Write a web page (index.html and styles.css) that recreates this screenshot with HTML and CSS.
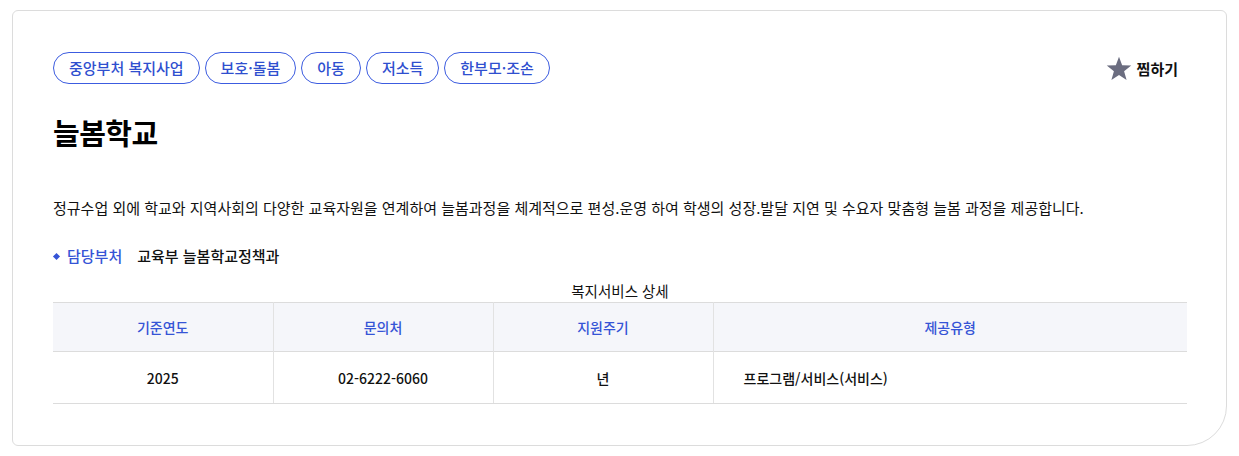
FILE: index.html
```html
<!DOCTYPE html>
<html lang="ko">
<head>
<meta charset="utf-8">
<title>늘봄학교</title>
<link rel="stylesheet" href="styles.css">
</head>
<body>
<div class="card">
  <div class="top">
    <ul class="tags">
      <li class="tag">중앙부처 복지사업</li>
      <li class="tag">보호·돌봄</li>
      <li class="tag">아동</li>
      <li class="tag">저소득</li>
      <li class="tag">한부모·조손</li>
    </ul>
    <button class="fav" type="button">
      <svg class="star" width="26" height="25" viewBox="0 0 24 23" aria-hidden="true"><path d="M12 0.6l2.9 7.9 8.4 0.3-6.6 5.2 2.3 8.1L12 17.4l-7 4.7 2.3-8.1L0.7 8.8l8.4-0.3z" fill="#6b6d80"/></svg>
      <span>찜하기</span>
    </button>
  </div>
  <h1 class="title">늘봄학교</h1>
  <p class="desc">정규수업 외에 학교와 지역사회의 다양한 교육자원을 연계하여 늘봄과정을 체계적으로 편성.운영 하여 학생의 성장.발달 지연 및 수요자 맞춤형 늘봄 과정을 제공합니다.</p>
  <div class="dept"><span class="dept-label">담당부처</span><span class="dept-value">교육부 늘봄학교정책과</span></div>
  <table class="detail">
    <caption>복지서비스 상세</caption>
    <thead>
      <tr><th class="c1">기준연도</th><th class="c2">문의처</th><th class="c3">지원주기</th><th class="c4">제공유형</th></tr>
    </thead>
    <tbody>
      <tr><td>2025</td><td>02-6222-6060</td><td>년</td><td class="left">프로그램/서비스(서비스)</td></tr>
    </tbody>
  </table>
</div>
</body>
</html>
```
FILE: styles.css
```css
* { box-sizing: border-box; }
body {
  margin: 0;
  background: #fff;
  font-family: "Noto Sans CJK KR", "Noto Sans", sans-serif;
  color: #111;
}
.card {
  margin: 10px 12px 0 12px;
  width: 1215px;
  height: 436px;
  border: 1px solid #dcdcdc;
  border-radius: 6px 6px 40px 6px;
  padding: 41px 39px 0 40px;
}
.top {
  display: flex;
  justify-content: space-between;
  align-items: center;
}
.tags {
  display: flex;
  gap: 5px;
  list-style: none;
  margin: 0;
  padding: 0;
}
.tag {
  height: 32px;
  line-height: 30px;
  padding: 0 15px;
  border: 1px solid #3c5ce0;
  border-radius: 16px;
  color: #2f4fcf;
  font-size: 15px;
  font-weight: 500;
}
.fav {
  display: flex;
  align-items: center;
  gap: 5px;
  border: 0;
  background: none;
  padding: 0;
  margin-right: 9px;
  font-family: inherit;
  font-size: 15px;
  font-weight: 700;
  color: #111;
  cursor: pointer;
}
.star { display: block; }
.title {
  margin: 27px 0 0;
  font-size: 29px;
  line-height: 42px;
  font-weight: 700;
  letter-spacing: -0.5px;
  color: #000;
}
.desc {
  margin: 43px 0 0;
  font-size: 15px;
  line-height: 24px;
  color: #111;
}
.dept {
  display: flex;
  align-items: center;
  margin-top: 24px;
  font-size: 15px;
  line-height: 24px;
}
.dept-label {
  position: relative;
  padding-left: 14px;
  color: #3554d6;
  font-weight: 500;
  margin-right: 15px;
}
.dept-label::before {
  content: "";
  position: absolute;
  left: 1px;
  top: 10px;
  width: 5px;
  height: 5px;
  background: #3554d6;
  transform: rotate(45deg);
}
.dept-value { font-weight: 500; color: #111; }
.detail {
  width: 1134px;
  margin-top: 12px;
  border-collapse: collapse;
  table-layout: fixed;
  font-size: 14px;
}
.detail caption {
  font-size: 14.5px;
  line-height: 22px;
  color: #111;
}
.c1, .c2, .c3 { width: 220px; }
.detail thead tr { border-top: 1px solid #dcdcdc; border-bottom: 1px solid #dcdcdc; }
.detail th {
  height: 49px;
  background: #f5f6fa;
  color: #3554d6;
  font-weight: 500;
  text-align: center;
  border-left: 1px solid #e2e2e2;
}
.detail td {
  height: 52px;
  text-align: center;
  font-weight: 500;
  color: #111;
  border-left: 1px solid #e2e2e2;
  border-bottom: 1px solid #dcdcdc;
}
.detail th:first-child, .detail td:first-child { border-left: 0; }
.detail td.left { text-align: left; padding-left: 30px; }
```
